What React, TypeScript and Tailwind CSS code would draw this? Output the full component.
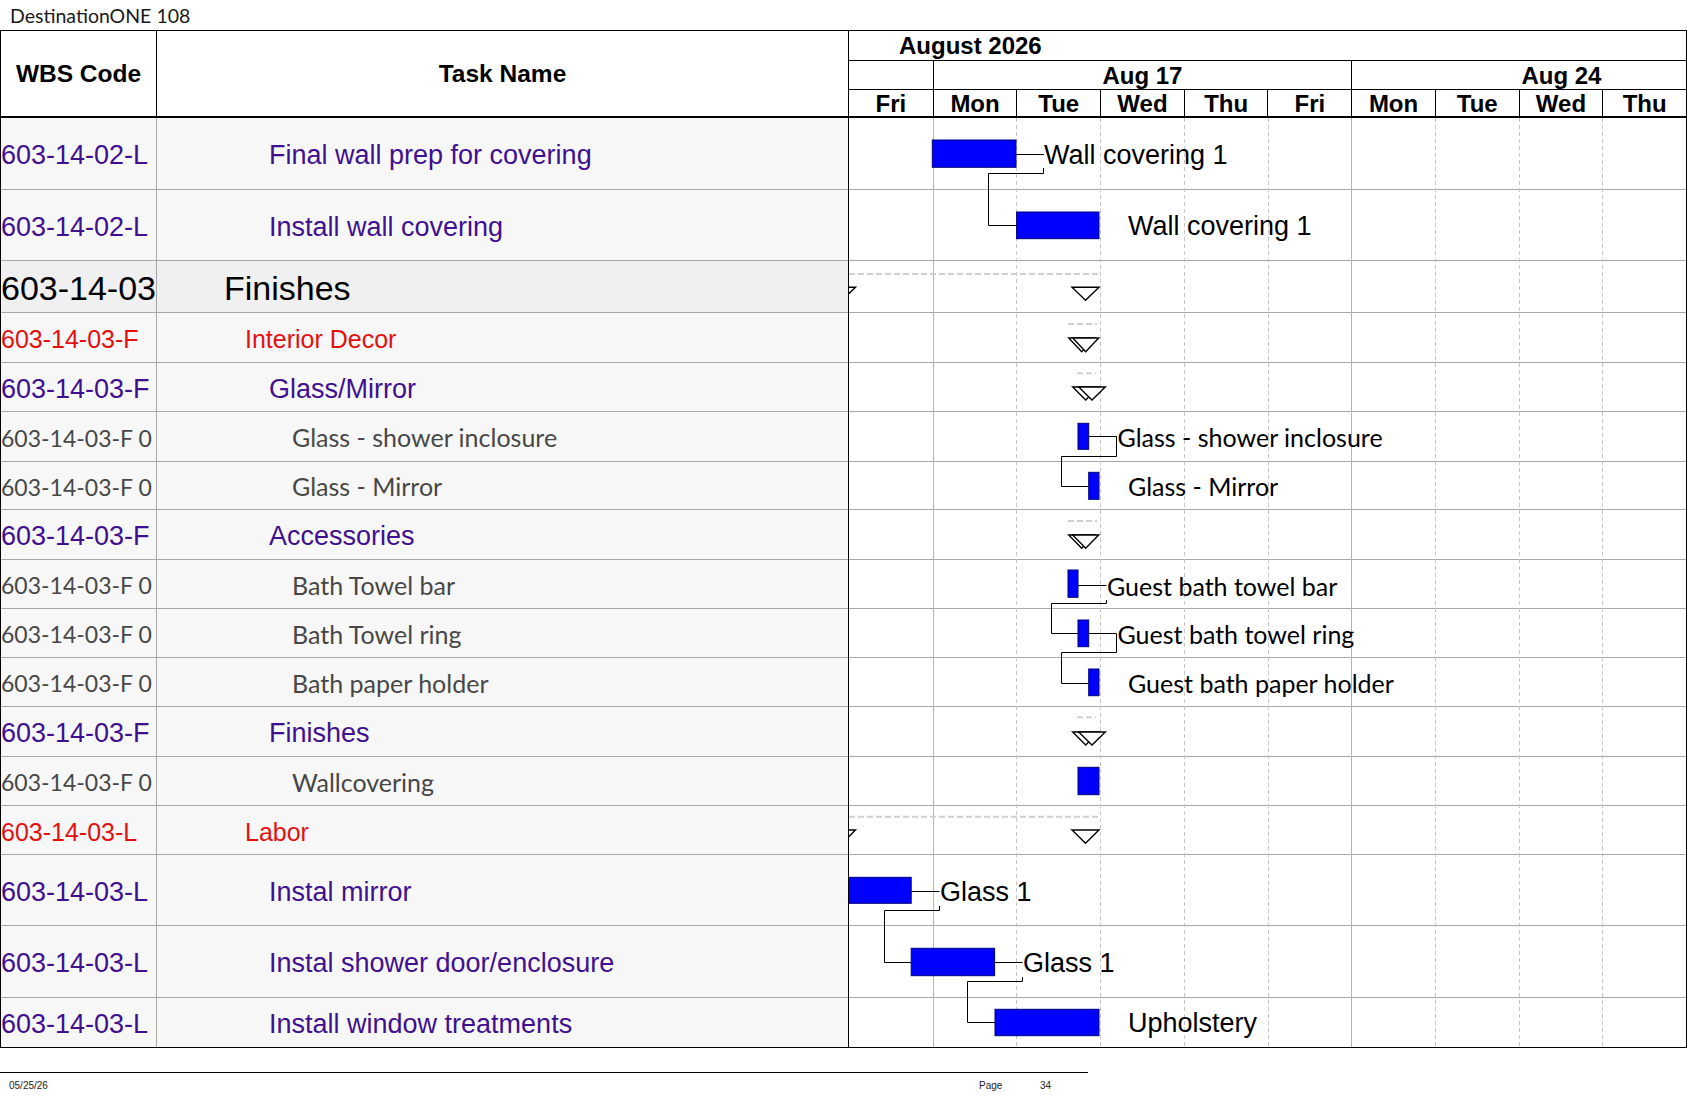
import React from 'react';

type Kind = 'purple' | 'big' | 'red' | 'gray';

const rows: { h: number; k: Kind; wbs: string; task: string }[] = [
  { h: 72, k: 'purple', wbs: '603-14-02-L', task: 'Final wall prep for covering' },
  { h: 71, k: 'purple', wbs: '603-14-02-L', task: 'Install wall covering' },
  { h: 52, k: 'big', wbs: '603-14-03', task: 'Finishes' },
  { h: 50, k: 'red', wbs: '603-14-03-F', task: 'Interior Decor' },
  { h: 49, k: 'purple', wbs: '603-14-03-F', task: 'Glass/Mirror' },
  { h: 50, k: 'gray', wbs: '603-14-03-F 0', task: 'Glass - shower inclosure' },
  { h: 48, k: 'gray', wbs: '603-14-03-F 0', task: 'Glass - Mirror' },
  { h: 50, k: 'purple', wbs: '603-14-03-F', task: 'Accessories' },
  { h: 49, k: 'gray', wbs: '603-14-03-F 0', task: 'Bath Towel bar' },
  { h: 49, k: 'gray', wbs: '603-14-03-F 0', task: 'Bath Towel ring' },
  { h: 49, k: 'gray', wbs: '603-14-03-F 0', task: 'Bath paper holder' },
  { h: 50, k: 'purple', wbs: '603-14-03-F', task: 'Finishes' },
  { h: 49, k: 'gray', wbs: '603-14-03-F 0', task: 'Wallcovering' },
  { h: 49, k: 'red', wbs: '603-14-03-L', task: 'Labor' },
  { h: 71, k: 'purple', wbs: '603-14-03-L', task: 'Instal mirror' },
  { h: 72, k: 'purple', wbs: '603-14-03-L', task: 'Instal shower door/enclosure' },
  { h: 49, k: 'purple', wbs: '603-14-03-L', task: 'Install window treatments' },
];

const wbsCls: Record<Kind, string> = {
  purple: "font-['Liberation_Sans',Arial,sans-serif] text-[27px] text-[#401090] pt-[4px]",
  big: "font-['Liberation_Sans',Arial,sans-serif] text-[34px] text-black pt-[4px]",
  red: "font-['Liberation_Sans',Arial,sans-serif] text-[25px] text-[#e31010] pt-[5px]",
  gray: "font-['Lato',sans-serif] text-[23px] text-[#474747] pt-[3px]",
};

const taskCls: Record<Kind, string> = {
  purple: "font-['Liberation_Sans',Arial,sans-serif] text-[27px] text-[#401090] pl-[112px] pt-[4px]",
  big: "font-['Liberation_Sans',Arial,sans-serif] text-[34px] text-black pl-[67px] pt-[4px]",
  red: "font-['Liberation_Sans',Arial,sans-serif] text-[25px] text-[#e31010] pl-[88px] pt-[5px]",
  gray: "font-['Lato',sans-serif] text-[25px] text-[#474747] pl-[135px] pt-[3px]",
};

const D = 83.7;
const days = ['Fri', 'Mon', 'Tue', 'Wed', 'Thu', 'Fri', 'Mon', 'Tue', 'Wed', 'Thu'];

const bars: [number, number, number, number][] = [
  [83.3, 22, 83.7, 27.3],
  [167.6, 94, 82.4, 26.7],
  [229, 305.3, 10.7, 26],
  [239.7, 354.3, 10.3, 27],
  [219, 452, 10, 27.3],
  [229, 502, 10.7, 26.7],
  [239.7, 551, 10.3, 26.7],
  [229, 649.3, 21, 27.4],
  [-2, 759.3, 64.2, 26],
  [62.2, 830.3, 83.4, 27.4],
  [146, 891.3, 104, 26.4],
];

const links = [
  'M167,36.5 H195',
  'M194.5,50 V55.5 H139.5 V107.5 H167.6',
  'M239.7,318.5 H267.5 V338.5 H212.5 V368.5 H239.7',
  'M229,467.5 H257.5',
  'M257.5,482 V485.5 H202.5 V515.5 H229',
  'M239.7,515.5 H267.5 V534.5 H212.5 V565.5 H239.7',
  'M62.2,773.5 H90.5',
  'M90.5,788 V792.5 H35.5 V844.5 H62.2',
  'M145.6,844.5 H173.5',
  'M173.5,859 V863.5 H118.5 V904.5 H146',
];

const dashes = [
  'M0,156 H250.7',
  'M219,206 H248',
  'M228,255.3 H247',
  'M219,403 H248',
  'M228,599.3 H247',
  'M0,698.7 H250.7',
];

// x, y, w, h
const tris: [number, number, number, number][] = [
  [-20.5, 169.3, 27, 13],
  [223, 169.3, 27, 13],
  [219.7, 220, 26, 13.7],
  [223.7, 220, 26, 13.7],
  [223.7, 269, 26, 13],
  [229.7, 269, 26.6, 13],
  [219.7, 417, 26, 13.3],
  [223.7, 417, 26, 13.3],
  [223.7, 614, 26, 13],
  [229.7, 614, 26.6, 13],
  [-20.5, 712, 27, 13.3],
  [223, 712, 27, 13.3],
];

type Lbl = { x: number; y: number; t: string; f: 'a' | 'c' };
const labels: Lbl[] = [
  { x: 195, y: 36.5, t: 'Wall covering 1', f: 'a' },
  { x: 279, y: 107.5, t: 'Wall covering 1', f: 'a' },
  { x: 268.5, y: 319, t: 'Glass - shower inclosure', f: 'c' },
  { x: 279, y: 368, t: 'Glass - Mirror', f: 'c' },
  { x: 258, y: 467.5, t: 'Guest bath towel bar', f: 'c' },
  { x: 268.5, y: 516, t: 'Guest bath towel ring', f: 'c' },
  { x: 279, y: 565, t: 'Guest bath paper holder', f: 'c' },
  { x: 91, y: 773.5, t: 'Glass 1', f: 'a' },
  { x: 174, y: 844.5, t: 'Glass 1', f: 'a' },
  { x: 279, y: 905, t: 'Upholstery', f: 'a' },
];

function GanttDrawing() {
  return (
    <svg className="absolute left-0 top-0" width={837} height={929} viewBox="0 0 837 929">
      {Array.from({ length: 9 }, (_, i) => {
        const k = i + 1;
        const x = Math.round(k * D) + 0.5;
        const solid = k === 1 || k === 6;
        return (
          <line
            key={k}
            x1={x}
            x2={x}
            y1={0}
            y2={929}
            stroke={solid ? '#b4b4b4' : '#c6c6c6'}
            strokeWidth={1}
            strokeDasharray={solid ? undefined : '4 3'}
          />
        );
      })}
      {dashes.map((d, i) => (
        <path key={'d' + i} d={d} stroke="#cfcfcf" strokeWidth={2} strokeDasharray="6 3" fill="none" />
      ))}
      {tris.map(([x, y, w, h], i) => (
        <polygon
          key={'t' + i}
          points={`${x},${y} ${x + w},${y} ${x + w / 2},${y + h}`}
          fill="#ffffff"
          stroke="#000000"
          strokeWidth={1.4}
        />
      ))}
      {links.map((d, i) => (
        <path key={'l' + i} d={d} stroke="#000000" strokeWidth={1} fill="none" />
      ))}
      {bars.map(([x, y, w, h], i) => (
        <rect key={'b' + i} x={x} y={y} width={w} height={h} fill="#0000ff" stroke="#00007a" strokeWidth={1} />
      ))}
    </svg>
  );
}

export default function App() {
  return (
    <div className="w-[1687px] h-[1097px] bg-white overflow-hidden text-black">
      <div className="h-[30px] flex items-center pl-[10px] pt-[2px] font-['Lato',sans-serif] text-[19.5px] text-[#1a1a1a] leading-none">
        DestinationONE 108
      </div>

      <div className="flex w-[1687px] border border-black">
        {/* Left table */}
        <div className="w-[847px] flex flex-col">
          <div className="flex h-[87px] border-b-2 border-black font-['Liberation_Sans',Arial,sans-serif] font-bold text-[24.5px] leading-none">
            <div className="w-[156px] border-r border-black flex items-center justify-center pt-[2px]">WBS Code</div>
            <div className="flex-1 flex items-center justify-center pt-[2px]">Task Name</div>
          </div>
          {rows.map((r, i) => (
            <div
              key={i}
              style={{ height: r.h }}
              className={`flex whitespace-nowrap ${r.k === 'big' ? 'bg-[#f0f0f0]' : 'bg-[#f7f7f7]'} ${
                i === rows.length - 1 ? '' : 'border-b border-[#a8a8a8]'
              }`}
            >
              <div className={`w-[156px] shrink-0 border-r border-[#a8a8a8] flex items-center overflow-hidden ${wbsCls[r.k]}`}>
                {r.wbs}
              </div>
              <div className={`flex-1 flex items-center overflow-hidden ${taskCls[r.k]}`}>{r.task}</div>
            </div>
          ))}
        </div>

        {/* Gantt */}
        <div className="w-[838px] border-l border-black flex flex-col">
          <div className="h-[87px] border-b-2 border-black flex flex-col font-['Liberation_Sans',Arial,sans-serif] font-bold text-[24px] leading-none">
            <div className="h-[30px] border-b border-black flex items-center pl-[50px] pt-[1px]">August 2026</div>
            <div className="h-[29px] border-b border-black flex">
              <div className="w-[83.7px] shrink-0" />
              <div className="w-[418.5px] shrink-0 border-l border-black flex items-center justify-center pt-[1px]">Aug 17</div>
              <div className="flex-1 border-l border-black overflow-hidden flex items-center pt-[1px]">
                <div className="w-[418.5px] shrink-0 text-center">Aug 24</div>
              </div>
            </div>
            <div className="flex-1 grid grid-cols-10">
              {days.map((d, i) => (
                <div key={i} className={`flex items-center justify-center pt-[2px] ${i === 0 ? '' : 'border-l border-black'}`}>
                  {d}
                </div>
              ))}
            </div>
          </div>
          <div className="relative w-[837px] overflow-hidden">
            {rows.map((r, i) => (
              <div
                key={i}
                style={{ height: r.h }}
                className={i === rows.length - 1 ? '' : 'border-b border-[#a8a8a8]'}
              />
            ))}
            <GanttDrawing />
            {labels.map((l, i) => (
              <div
                key={i}
                style={{ left: l.x, top: l.y }}
                className={`absolute -translate-y-1/2 whitespace-nowrap leading-none text-black ${
                  l.f === 'a'
                    ? "font-['Liberation_Sans',Arial,sans-serif] text-[27px]"
                    : "font-['Lato',sans-serif] text-[25px]"
                }`}
              >
                {l.t}
              </div>
            ))}
          </div>
        </div>
      </div>

      <div className="mt-[24px] w-[1088px] border-t border-black flex items-start pt-[8px] font-['Liberation_Sans',Arial,sans-serif] text-[10px] leading-none text-[#222]">
        <div className="w-[979px] pl-[9px]">05/25/26</div>
        <div className="w-[61px]">Page</div>
        <div>34</div>
      </div>
    </div>
  );
}
